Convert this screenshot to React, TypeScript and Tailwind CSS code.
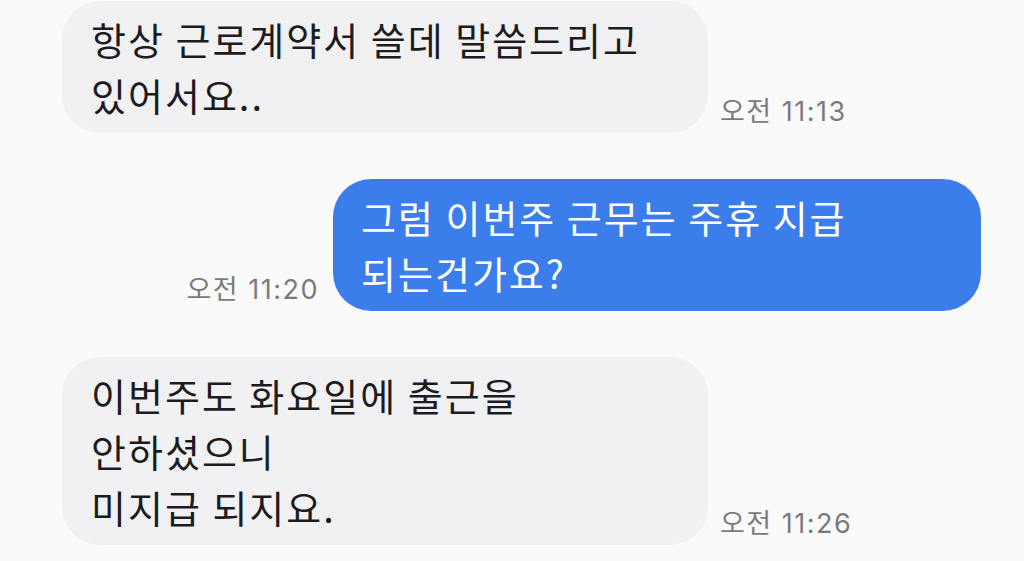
import React from 'react';

type Msg = { mine: boolean; lines: string[]; time: string };

const messages: Msg[] = [
  { mine: false, lines: ['항상 근로계약서 쓸데 말씀드리고', '있어서요..'], time: '오전 11:13' },
  { mine: true, lines: ['그럼 이번주 근무는 주휴 지급', '되는건가요?'], time: '오전 11:20' },
  { mine: false, lines: ['이번주도 화요일에 출근을', '안하셨으니', '미지급 되지요.'], time: '오전 11:26' },
];

const font = { fontFamily: '"Noto Sans CJK KR", "Noto Sans", sans-serif' };

const Time = ({ t }: { t: string }) => (
  <span
    className="text-[27px] leading-none text-[#7a7a7c] whitespace-nowrap mb-[8px] tracking-[1.5px]"
    style={{ fontFamily: 'Inter, "Noto Sans CJK KR", sans-serif' }}
  >
    {t}
  </span>
);

export default function App() {
  return (
    <div className="w-[1024px] h-[561px] overflow-hidden bg-[#fafafb] pt-[1px] flex flex-col gap-[46px]" style={font}>
      {messages.map((m, i) =>
        m.mine ? (
          <div key={i} className="flex items-end justify-end pr-[43px] gap-[14px]">
            <Time t={m.time} />
            <div className="w-[648px] rounded-[38px] bg-[#3b7eeb] text-white text-[38px] tracking-[2px] leading-[56px] px-[28px] py-[10px]">
              {m.lines.map((l, j) => (
                <div key={j}>{l}</div>
              ))}
            </div>
          </div>
        ) : (
          <div key={i} className="flex items-end pl-[62px] gap-[12px]">
            <div className="w-[646px] rounded-[38px] bg-[#f1f1f3] text-[#1c1c1e] text-[38px] tracking-[2px] leading-[56px] px-[29px] py-[10px]">
              {m.lines.map((l, j) => (
                <div key={j}>{l}</div>
              ))}
            </div>
            <Time t={m.time} />
          </div>
        )
      )}
    </div>
  );
}
